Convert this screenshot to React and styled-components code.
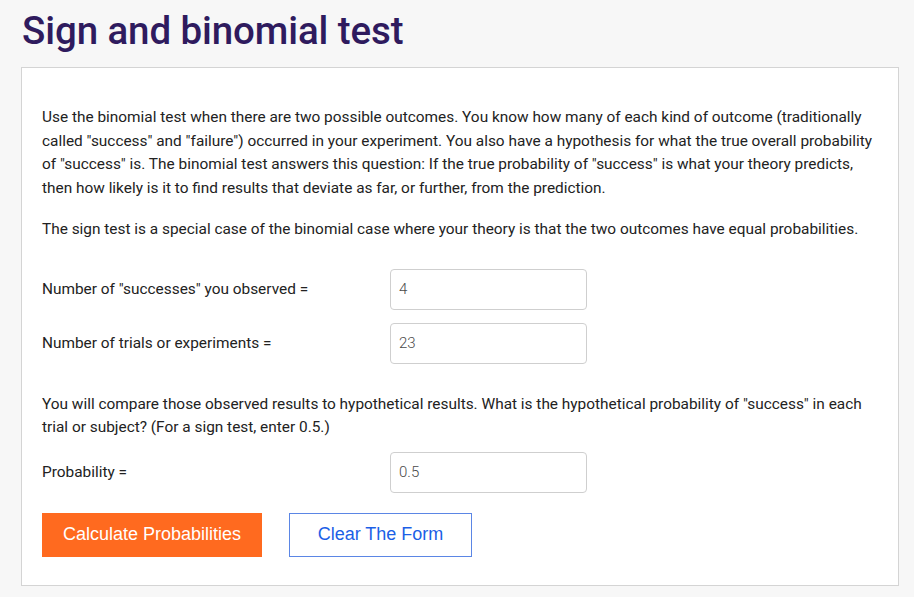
import React from "react";
import styled, { createGlobalStyle } from "styled-components";

const Global = createGlobalStyle`
  html, body { margin: 0; padding: 0; background: #f7f7f7; }
  body { font-family: Roboto, "Noto Sans", sans-serif; color: #222; }
  * { box-sizing: border-box; }
`;

const Page = styled.div`
  padding: 0 16px 0 21px;
  width: 914px;
`;

const Title = styled.h1`
  margin: 0;
  padding: 9px 0 0 1px;
  height: 67px;
  font-family: Roboto, "Noto Sans", sans-serif;
  font-weight: 500;
  font-size: 38.5px;
  line-height: 44px;
  color: #2f1b5e;
  letter-spacing: -0.1px;
`;

const Panel = styled.div`
  background: #fff;
  border: 1px solid #d4d4d4;
  width: 878px;
  padding: 38px 20px 28px 20px;
`;

const Para = styled.p`
  margin: 0 0 ${(p) => p.$mb || 0}px 0;
  font-size: 15.4px;
  line-height: 23.7px;
  color: #222;
`;

const Row = styled.div`
  display: grid;
  grid-template-columns: 348px 197px;
  align-items: center;
  margin-bottom: ${(p) => p.$mb || 0}px;
`;

const Label = styled.label`
  font-size: 15.4px;
  color: #222;
`;

const Input = styled.input`
  height: 41px;
  width: 197px;
  border: 1px solid #cfcfcf;
  border-radius: 4px;
  padding: 0 8px;
  font-family: Roboto, sans-serif;
  font-weight: 300;
  font-size: 15px;
  color: #4a4a4a;
  background: #fff;
  outline: none;
`;

const Buttons = styled.div`
  display: flex;
  gap: 27px;
`;

const Button = styled.button`
  height: 44px;
  font-family: "Liberation Sans", Arial, sans-serif;
  font-size: 18px;
  cursor: pointer;
  padding: 0;
  width: ${(p) => p.$w}px;
  background: ${(p) => (p.$primary ? "#ff6a1f" : "#fff")};
  color: ${(p) => (p.$primary ? "#fff" : "#1c5fe6")};
  border: 1px solid ${(p) => (p.$primary ? "#ff6a1f" : "#5b86e5")};
`;

export default function App() {
  return (
    <Page>
      <Global />
      <Title>Sign and binomial test</Title>
      <Panel>
        <Para $mb={17}>
          Use the binomial test when there are two possible outcomes. You know how many of each kind of outcome (traditionally
          called "success" and "failure") occurred in your experiment. You also have a hypothesis for what the true overall probability
          of "success" is. The binomial test answers this question: If the true probability of "success" is what your theory predicts,
          then how likely is it to find results that deviate as far, or further, from the prediction.
        </Para>
        <Para $mb={27}>
          The sign test is a special case of the binomial case where your theory is that the two outcomes have equal probabilities.
        </Para>
        <Row $mb={13}>
          <Label>Number of "successes" you observed =</Label>
          <Input defaultValue="4" />
        </Row>
        <Row $mb={29}>
          <Label>Number of trials or experiments =</Label>
          <Input defaultValue="23" />
        </Row>
        <Para $mb={12}>
          You will compare those observed results to hypothetical results. What is the hypothetical probability of "success" in each
          trial or subject? (For a sign test, enter 0.5.)
        </Para>
        <Row $mb={20}>
          <Label>Probability =</Label>
          <Input defaultValue="0.5" />
        </Row>
        <Buttons>
          <Button $primary $w={220}>Calculate Probabilities</Button>
          <Button $w={183}>Clear The Form</Button>
        </Buttons>
      </Panel>
    </Page>
  );
}
